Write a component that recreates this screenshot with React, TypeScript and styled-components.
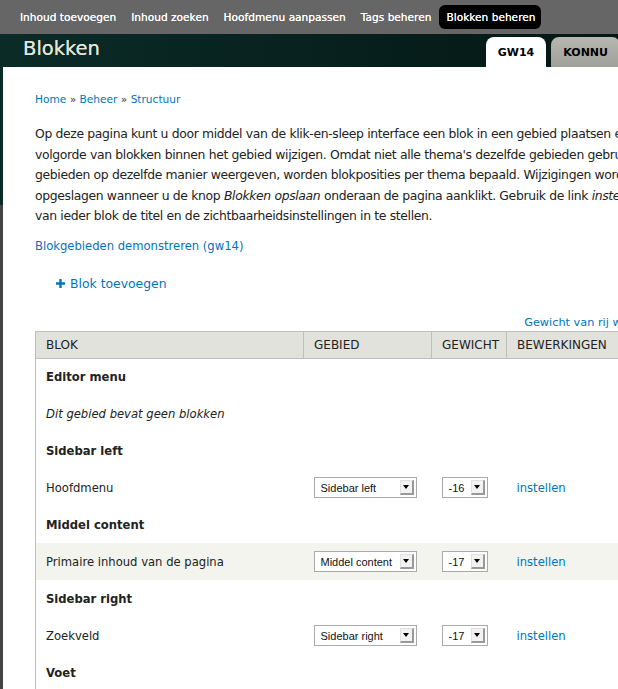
import React from "react";
import styled, { createGlobalStyle } from "styled-components";

const Global = createGlobalStyle`
  html, body { margin: 0; padding: 0; }
  body {
    overflow: hidden;
    background: #454545;
    font-family: "DejaVu Sans", "Liberation Sans", sans-serif;
    color: #333;
  }
  #root { width: 760px; }
`;

const Toolbar = styled.nav`
  height: 34px;
  background: #666;
  display: flex;
  align-items: center;
  padding-left: 13px;
  gap: 2px;
`;

const ToolItem = styled.a<{ $active?: boolean }>`
  font-size: 10.6px;
  line-height: 14px;
  color: #fff;
  padding: 5px 6px 5px 7px;
  border-radius: 6px;
  background: ${(p) => (p.$active ? "#000" : "transparent")};
  text-decoration: none;
  white-space: nowrap;
  text-shadow: 0 0 0.5px #fff;
`;

const Page = styled.div`
  background:
    linear-gradient(to right, #0b2b27, #021310) top left / 100% 171px no-repeat,
    #454545;
`;

const Branding = styled.header`
  height: 33px;
  display: flex;
  align-items: flex-end;
  justify-content: space-between;
  padding: 0 140px 0 23px;
`;

const Title = styled.h1`
  margin: 0 0 6px;
  font-size: 19.5px;
  font-weight: normal;
  color: #e4e4dc;
  line-height: 24px;
  text-shadow: 0 0 0.4px #e4e4dc;
`;

const Tabs = styled.ul`
  list-style: none;
  margin: 0;
  padding: 0;
  display: flex;
  gap: 5px;
`;

const Tab = styled.li<{ $active?: boolean }>`
  height: 30px;
  padding: 0 12px;
  display: flex;
  align-items: center;
  justify-content: center;
  border-radius: 8px 8px 0 0;
  background: ${(p) => (p.$active ? "#fff" : "linear-gradient(#b8b8b2, #a0a09a)")};
  font-size: 11px;
  font-weight: bold;
  color: #000;
`;

const Panel = styled.main`
  margin-left: 3px;
  background: #fff;
  padding: 24px 85px 40px 32px;
  min-height: 700px;
`;

const Link = styled.a`
  color: #0074bd;
  text-decoration: none;
`;

const Breadcrumb = styled.div`
  font-size: 10.6px;
  line-height: 16px;
  color: #333;
`;

const Help = styled.p`
  margin: 17px 0 0;
  font-size: 12.4px;
  letter-spacing: -0.35px;
  line-height: 20.5px;
  color: #222;
  white-space: nowrap;
`;

const Demo = styled.div`
  margin-top: 11px;
  font-size: 11.6px;
  line-height: 16px;
`;

const ActionLink = styled.div`
  margin: 22px 0 0 21px;
  font-size: 12.4px;
  line-height: 16px;
  display: flex;
  align-items: center;
  gap: 5px;
`;

const WeightToggle = styled.div`
  margin-top: 23px;
  text-align: right;
  font-size: 11.3px;
  line-height: 16px;
`;

const Table = styled.table`
  width: 100%;
  table-layout: fixed;
  border-collapse: collapse;
  color: #222;
  border-left: 1px solid #bebfb9;
`;

const Th = styled.th`
  background: #e1e2dc;
  border: 1px solid #bebfb9;
  text-align: left;
  font-weight: normal;
  font-size: 12px;
  text-transform: uppercase;
  height: 26px;
  padding: 0 9px 0 10px;
  white-space: nowrap;
`;

const Tr = styled.tr<{ $odd?: boolean }>`
  height: 37px;
  background: ${(p) => (p.$odd ? "#f3f4ee" : "#fff")};
`;

const Td = styled.td<{ $kind?: "region" | "empty" | "normal" }>`
  padding: 0 10px;
  font-size: 11.6px;
  white-space: nowrap;
  font-weight: ${(p) => (p.$kind === "region" ? "bold" : "normal")};
  font-style: ${(p) => (p.$kind === "empty" ? "italic" : "normal")};
`;

const Select = styled.div<{ $w: number }>`
  width: ${(p) => p.$w}px;
  height: 21px;
  box-sizing: border-box;
  border: 1px solid #aaa;
  background: #fff;
  display: flex;
  align-items: center;
  justify-content: space-between;
  padding: 0 2px 0 6px;
  font-family: "Liberation Sans", Arial, sans-serif;
  font-size: 11px;
  color: #111;
`;

const Arrow = styled.span`
  width: 14px;
  height: 15px;
  box-sizing: border-box;
  background: #f2f2f2;
  border-right: 2px solid #999;
  border-bottom: 2px solid #999;
  border-top: 1px solid #e0e0e0;
  border-left: 1px solid #e0e0e0;
  display: flex;
  align-items: center;
  justify-content: center;
  &::after {
    content: "";
    border-left: 3px solid transparent;
    border-right: 3px solid transparent;
    border-top: 4px solid #000;
  }
`;

function PlusIcon() {
  return (
    <svg width="9" height="9" viewBox="0 0 9 9">
      <path d="M3.3 0h2.4v3.3H9v2.4H5.7V9H3.3V5.7H0V3.3h3.3z" fill="#0074bd" />
    </svg>
  );
}

type Row =
  | { kind: "region"; label: string }
  | { kind: "empty"; label: string }
  | { kind: "block"; label: string; region: string; weight: string; odd?: boolean };

const rows: Row[] = [
  { kind: "region", label: "Editor menu" },
  { kind: "empty", label: "Dit gebied bevat geen blokken" },
  { kind: "region", label: "Sidebar left" },
  { kind: "block", label: "Hoofdmenu", region: "Sidebar left", weight: "-16" },
  { kind: "region", label: "Middel content" },
  { kind: "block", label: "Primaire inhoud van de pagina", region: "Middel content", weight: "-17", odd: true },
  { kind: "region", label: "Sidebar right" },
  { kind: "block", label: "Zoekveld", region: "Sidebar right", weight: "-17" },
  { kind: "region", label: "Voet" },
];

export default function App() {
  return (
    <>
      <Global />
      <Toolbar>
        <ToolItem>Inhoud toevoegen</ToolItem>
        <ToolItem>Inhoud zoeken</ToolItem>
        <ToolItem>Hoofdmenu aanpassen</ToolItem>
        <ToolItem>Tags beheren</ToolItem>
        <ToolItem $active>Blokken beheren</ToolItem>
      </Toolbar>
      <Page>
        <Branding>
          <Title>Blokken</Title>
          <Tabs>
            <Tab $active>GW14</Tab>
            <Tab>KONNU</Tab>
          </Tabs>
        </Branding>
        <Panel>
          <Breadcrumb>
            <Link>Home</Link> » <Link>Beheer</Link> » <Link>Structuur</Link>
          </Breadcrumb>
          <Help>
            Op deze pagina kunt u door middel van de klik-en-sleep interface een blok in een gebied plaatsen en de
            <br />
            volgorde van blokken binnen het gebied wijzigen. Omdat niet alle thema's dezelfde gebieden gebruiken of
            <br />
            gebieden op dezelfde manier weergeven, worden blokposities per thema bepaald. Wijzigingen worden pas
            <br />
            opgeslagen wanneer u de knop <em>Blokken opslaan</em> onderaan de pagina aanklikt. Gebruik de link{" "}
            <em>instellen</em> om
            <br />
            van ieder blok de titel en de zichtbaarheidsinstellingen in te stellen.
          </Help>
          <Demo>
            <Link>Blokgebieden demonstreren (gw14)</Link>
          </Demo>
          <ActionLink>
            <PlusIcon />
            <Link>Blok toevoegen</Link>
          </ActionLink>
          <WeightToggle>
            <Link>Gewicht van rij weergeven</Link>
          </WeightToggle>
          <Table>
            <colgroup>
              <col style={{ width: 268 }} />
              <col style={{ width: 128 }} />
              <col style={{ width: 75 }} />
              <col />
            </colgroup>
            <thead>
              <tr>
                <Th>Blok</Th>
                <Th>Gebied</Th>
                <Th>Gewicht</Th>
                <Th>Bewerkingen</Th>
              </tr>
            </thead>
            <tbody>
              {rows.map((r, i) =>
                r.kind === "block" ? (
                  <Tr key={i} $odd={r.odd}>
                    <Td>{r.label}</Td>
                    <Td>
                      <Select $w={103}>
                        {r.region}
                        <Arrow />
                      </Select>
                    </Td>
                    <Td>
                      <Select $w={46}>
                        {r.weight}
                        <Arrow />
                      </Select>
                    </Td>
                    <Td>
                      <Link>instellen</Link>
                    </Td>
                  </Tr>
                ) : (
                  <Tr key={i}>
                    <Td $kind={r.kind} colSpan={4}>
                      {r.label}
                    </Td>
                  </Tr>
                )
              )}
            </tbody>
          </Table>
        </Panel>
      </Page>
    </>
  );
}
